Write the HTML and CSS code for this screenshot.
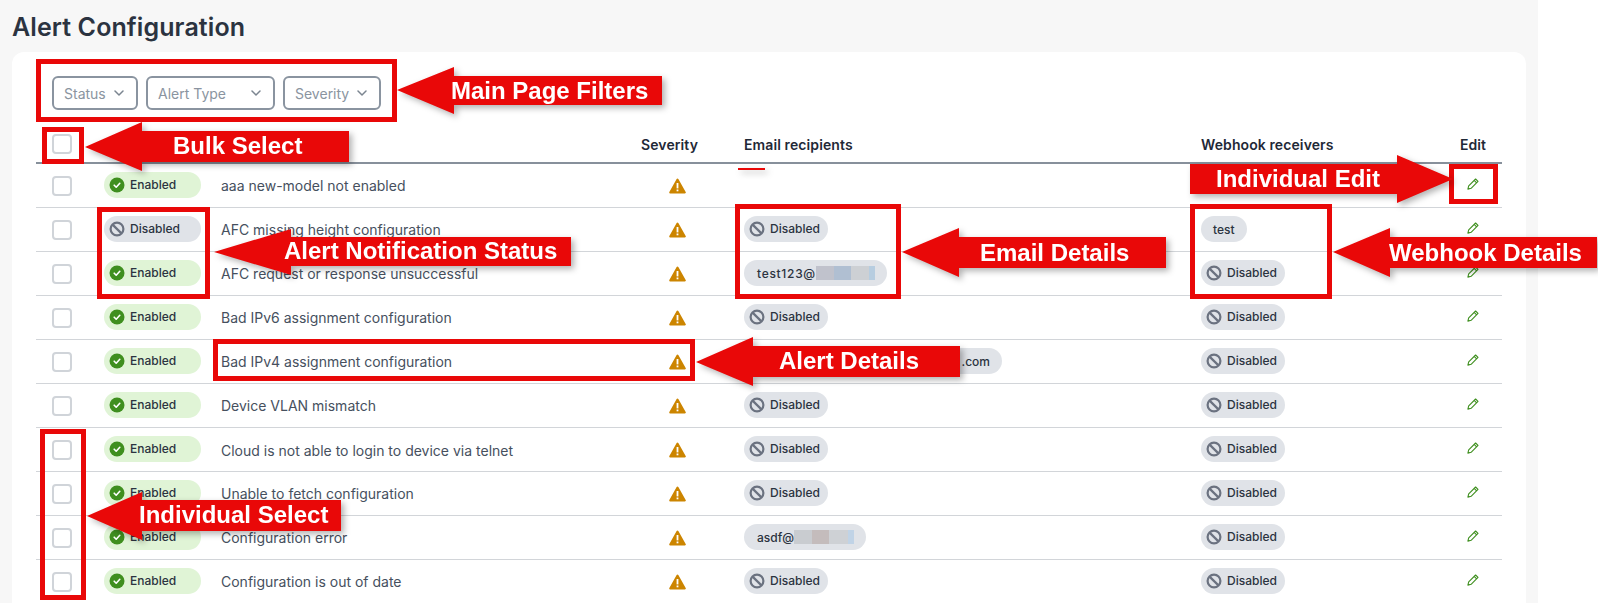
FILE: index.html
```html
<!DOCTYPE html>
<html lang="en">
<head>
<meta charset="utf-8">
<title>Alert Configuration</title>
<link rel="stylesheet" href="styles.css">
</head>
<body>
<svg class="defs" aria-hidden="true">
  <symbol id="i-check" viewBox="0 0 16 16"><circle cx="8" cy="8" r="7.5" fill="#3f8f1f"/><path d="M5.2 8.2l2 2 3.6-3.9" fill="none" stroke="#fff" stroke-width="1.6" stroke-linecap="round" stroke-linejoin="round"/></symbol>
  <symbol id="i-ban" viewBox="0 0 16 16"><circle cx="8" cy="8" r="6.4" fill="none" stroke="#6b7280" stroke-width="2.2"/><path d="M3.6 3.6l8.8 8.8" stroke="#6b7280" stroke-width="2.2"/></symbol>
  <symbol id="i-warn" viewBox="0 0 17 16"><path d="M8.5 1.5L15.8 14.4H1.2z" fill="#cc8500" stroke="#cc8500" stroke-width="2" stroke-linejoin="round"/><rect x="7.6" y="5" width="1.8" height="5.4" fill="#fff"/><rect x="7.6" y="11.5" width="1.8" height="1.8" fill="#fff"/></symbol>
  <symbol id="i-edit" viewBox="0 0 12 12"><path d="M8.6 1l2.4 2.4-6.9 6.9-3.2.8.8-3.2zM7.2 2.4l2.4 2.4" fill="none" stroke="#3f8f1f" stroke-width="1.1" stroke-linejoin="round"/></symbol>
  <symbol id="i-chev" viewBox="0 0 10 6"><path d="M1 1l4 4 4-4" fill="none" stroke="#7b8590" stroke-width="1.5" stroke-linecap="round" stroke-linejoin="round"/></symbol>
</svg>
<div class="page">
  <h1 class="title">Alert Configuration</h1>
  <main class="card">
    <div class="filters">
      <div class="select select-status"><span>Status</span><svg class="chev"><use href="#i-chev"/></svg></div>
      <div class="select select-type"><span>Alert Type</span><svg class="chev"><use href="#i-chev"/></svg></div>
      <div class="select select-severity"><span>Severity</span><svg class="chev"><use href="#i-chev"/></svg></div>
    </div>
    <div class="row head">
      <span class="check"></span><span></span><span></span>
      <span>Severity</span><span>Email recipients</span><span>Webhook receivers</span><span class="edit-head">Edit</span>
    </div>

    <div class="row">
      <span class="check"></span>
      <span class="pill pill-on pill-status"><svg class="ico"><use href="#i-check"/></svg>Enabled</span>
      <span class="desc">aaa new-model not enabled</span>
      <svg class="warn"><use href="#i-warn"/></svg>
      <span></span>
      <span></span>
      <svg class="edit"><use href="#i-edit"/></svg>
    </div>
    <div class="row">
      <span class="check"></span>
      <span class="pill pill-off pill-status"><svg class="ico"><use href="#i-ban"/></svg>Disabled</span>
      <span class="desc">AFC missing height configuration</span>
      <svg class="warn"><use href="#i-warn"/></svg>
      <span class="pill pill-off"><svg class="ico"><use href="#i-ban"/></svg>Disabled</span>
      <span class="pill pill-off pill-text pill-test">test</span>
      <svg class="edit"><use href="#i-edit"/></svg>
    </div>
    <div class="row">
      <span class="check"></span>
      <span class="pill pill-on pill-status"><svg class="ico"><use href="#i-check"/></svg>Enabled</span>
      <span class="desc">AFC request or response unsuccessful</span>
      <svg class="warn"><use href="#i-warn"/></svg>
      <span class="pill pill-off pill-text pill-spaced">test123@<i class="redact redact-a"></i></span>
      <span class="pill pill-off"><svg class="ico"><use href="#i-ban"/></svg>Disabled</span>
      <svg class="edit"><use href="#i-edit"/></svg>
    </div>
    <div class="row">
      <span class="check"></span>
      <span class="pill pill-on pill-status"><svg class="ico"><use href="#i-check"/></svg>Enabled</span>
      <span class="desc">Bad IPv6 assignment configuration</span>
      <svg class="warn"><use href="#i-warn"/></svg>
      <span class="pill pill-off"><svg class="ico"><use href="#i-ban"/></svg>Disabled</span>
      <span class="pill pill-off"><svg class="ico"><use href="#i-ban"/></svg>Disabled</span>
      <svg class="edit"><use href="#i-edit"/></svg>
    </div>
    <div class="row">
      <span class="check"></span>
      <span class="pill pill-on pill-status"><svg class="ico"><use href="#i-check"/></svg>Enabled</span>
      <span class="desc">Bad IPv4 assignment configuration</span>
      <svg class="warn"><use href="#i-warn"/></svg>
      <span class="pill pill-off pill-text pill-long">.com</span>
      <span class="pill pill-off"><svg class="ico"><use href="#i-ban"/></svg>Disabled</span>
      <svg class="edit"><use href="#i-edit"/></svg>
    </div>
    <div class="row">
      <span class="check"></span>
      <span class="pill pill-on pill-status"><svg class="ico"><use href="#i-check"/></svg>Enabled</span>
      <span class="desc">Device VLAN mismatch</span>
      <svg class="warn"><use href="#i-warn"/></svg>
      <span class="pill pill-off"><svg class="ico"><use href="#i-ban"/></svg>Disabled</span>
      <span class="pill pill-off"><svg class="ico"><use href="#i-ban"/></svg>Disabled</span>
      <svg class="edit"><use href="#i-edit"/></svg>
    </div>
    <div class="row">
      <span class="check"></span>
      <span class="pill pill-on pill-status"><svg class="ico"><use href="#i-check"/></svg>Enabled</span>
      <span class="desc desc-low">Cloud is not able to login to device via telnet</span>
      <svg class="warn"><use href="#i-warn"/></svg>
      <span class="pill pill-off"><svg class="ico"><use href="#i-ban"/></svg>Disabled</span>
      <span class="pill pill-off"><svg class="ico"><use href="#i-ban"/></svg>Disabled</span>
      <svg class="edit"><use href="#i-edit"/></svg>
    </div>
    <div class="row">
      <span class="check"></span>
      <span class="pill pill-on pill-status"><svg class="ico"><use href="#i-check"/></svg>Enabled</span>
      <span class="desc">Unable to fetch configuration</span>
      <svg class="warn"><use href="#i-warn"/></svg>
      <span class="pill pill-off"><svg class="ico"><use href="#i-ban"/></svg>Disabled</span>
      <span class="pill pill-off"><svg class="ico"><use href="#i-ban"/></svg>Disabled</span>
      <svg class="edit"><use href="#i-edit"/></svg>
    </div>
    <div class="row">
      <span class="check"></span>
      <span class="pill pill-on pill-status"><svg class="ico"><use href="#i-check"/></svg>Enabled</span>
      <span class="desc">Configuration error</span>
      <svg class="warn"><use href="#i-warn"/></svg>
      <span class="pill pill-off pill-text">asdf@<i class="redact redact-b"></i></span>
      <span class="pill pill-off"><svg class="ico"><use href="#i-ban"/></svg>Disabled</span>
      <svg class="edit"><use href="#i-edit"/></svg>
    </div>
    <div class="row">
      <span class="check"></span>
      <span class="pill pill-on pill-status"><svg class="ico"><use href="#i-check"/></svg>Enabled</span>
      <span class="desc">Configuration is out of date</span>
      <svg class="warn"><use href="#i-warn"/></svg>
      <span class="pill pill-off"><svg class="ico"><use href="#i-ban"/></svg>Disabled</span>
      <span class="pill pill-off"><svg class="ico"><use href="#i-ban"/></svg>Disabled</span>
      <svg class="edit"><use href="#i-edit"/></svg>
    </div>
  </main>

  <div class="box box-filters"></div>
  <div class="box box-bulk"></div>
  <div class="box box-status"></div>
  <div class="box box-email"></div>
  <div class="box box-webhook"></div>
  <div class="box box-edit"></div>
  <div class="box box-alert"></div>
  <div class="box box-select"></div>

  <div class="callout remnant"><div class="shape"></div></div>
  <div class="callout c-filters"><div class="shape"><span>Main Page Filters</span></div></div>
  <div class="callout c-bulk"><div class="shape"><span>Bulk Select</span></div></div>
  <div class="callout c-status"><div class="shape"><span>Alert Notification Status</span></div></div>
  <div class="callout c-email"><div class="shape"><span>Email Details</span></div></div>
  <div class="callout c-webhook"><div class="shape"><span>Webhook Details</span></div></div>
  <div class="callout c-edit"><div class="shape"><span>Individual Edit</span></div></div>
  <div class="callout c-alert"><div class="shape"><span>Alert Details</span></div></div>
  <div class="callout c-select"><div class="shape"><span>Individual Select</span></div></div>
</div>
</body>
</html>
```
FILE: styles.css
```css
* { box-sizing: border-box; }
html, body { margin: 0; height: 603px; overflow: hidden; background: #fff; }
body { font-family: Inter, "Liberation Sans", sans-serif; color: #1f2937; }
.defs { position: absolute; width: 0; height: 0; }

.page { position: relative; width: 1538px; height: 603px; padding: 0 12px; background: #f7f7f7; overflow: visible; }
.title { margin: 0; height: 52px; padding-top: 12px; font-size: 25px; line-height: 30px; font-weight: 600; letter-spacing: .1px; color: #2b3340; }
.card { width: 1514px; height: 551px; padding: 24px 24px 0; background: #fff; border-radius: 12px 12px 0 0; }

.filters { display: flex; gap: 8px; padding-left: 16px; height: 34px; }
.select { display: flex; align-items: center; justify-content: space-between; height: 34px; padding: 0 12px 0 10px; border: 2px solid #8a94a0; border-radius: 6px; font-size: 14px; color: #8a94a0; }
.select-status { width: 86px; }
.select-type { width: 129px; }
.select-severity { width: 98px; }
.chev { width: 10px; height: 6px; }

.row { display: grid; grid-template-columns: 68px 117px 420px 103px 457px 243px 58px; align-items: center; justify-items: start; height: 44px; padding-bottom: 1px; border-bottom: 1px solid #d2d5d9; }
.head { height: 54px; padding: 16px 0 0; border-bottom: 2px solid #87909b; font-size: 14px; font-weight: 600; letter-spacing: .1px; color: #1f2937; }
.head .check { margin: 0 0 0 16px; }
.edit-head { justify-self: center; }

.check { width: 20px; height: 20px; margin: 2px 0 0 16px; border: 2px solid #d0d4d9; border-radius: 4px; background: #fff; }

.pill { display: inline-flex; align-items: center; gap: 5px; height: 26px; padding: 0 8px 1px 5px; border-radius: 13px; font-size: 12px; font-weight: 500; color: #2b3340; white-space: nowrap; }
.pill-on { background: #e0f4d6; }
.pill-off { background: #e0e3e8; }
.pill-status { width: 97px; }
.pill-text { padding: 0 12px 0 13px; gap: 0; }
.pill-test { width: 46px; padding: 0 12px; }
.pill-long { width: 258px; justify-content: flex-end; }
.pill-spaced { letter-spacing: .7px; }
.ico { width: 16px; height: 16px; flex: none; }

.redact { display: block; height: 14px; }
.redact-a { width: 59px; background: linear-gradient(90deg, #c0c2cc 0 31%, #b0bfd2 31% 60%, #cdd0d4 60% 90%, #b7cde0 90%); }
.redact-b { width: 60px; background: linear-gradient(90deg, #c9ccd0 0 30%, #c4bcbc 30% 58%, #ced1d5 58% 90%, #c0d3e6 90%); }

.desc { margin-top: 1px; font-size: 14px; color: #46505e; white-space: nowrap; }
.desc-low { margin-top: 3px; }
.warn { width: 17px; height: 16px; margin: 1px 0 0 28px; }
.edit { width: 12px; height: 12px; margin-bottom: 3px; justify-self: center; }

.box { position: absolute; border: 5px solid #e90808; }
.box-filters { left: 36px; top: 59px; width: 361px; height: 63px; }
.box-bulk { left: 42px; top: 127px; width: 42px; height: 37px; }
.box-status { left: 97px; top: 207px; width: 113px; height: 92px; }
.box-email { left: 735px; top: 204px; width: 166px; height: 95px; }
.box-webhook { left: 1190px; top: 204px; width: 142px; height: 95px; }
.box-edit { left: 1449px; top: 164px; width: 49px; height: 40px; }
.box-alert { left: 213px; top: 339px; width: 482px; height: 42px; }
.box-select { left: 40px; top: 429px; width: 46px; height: 171px; }

.callout { position: absolute; filter: drop-shadow(3px 3px 3px rgba(0, 0, 0, .3)); }
.shape { display: flex; align-items: center; width: 100%; height: 100%; background: #e90808; font-family: "Liberation Sans", Arial, sans-serif; font-size: 24px; font-weight: 700; color: #fff; white-space: nowrap; }

.remnant { left: 738px; top: 168px; width: 27px; height: 2px; }

.c-filters { left: 397px; top: 67px; width: 265px; height: 47px; }
.c-filters .shape { padding-left: 54px; clip-path: polygon(0 23px, 57px 0, 57px 9px, 265px 9px, 265px 38px, 57px 38px, 57px 47px); }

.c-bulk { left: 85px; top: 122px; width: 264px; height: 49px; }
.c-bulk .shape { padding: 0 0 2px 88px; clip-path: polygon(0 25px, 57px 0, 57px 9px, 264px 9px, 264px 40px, 57px 40px, 57px 49px); }

.c-status { left: 214px; top: 229px; width: 357px; height: 46px; }
.c-status .shape { padding: 0 0 2px 70px; clip-path: polygon(0 23px, 77px 0, 77px 8px, 357px 8px, 357px 37px, 77px 37px, 77px 46px); }

.c-email { left: 902px; top: 228px; width: 264px; height: 49px; }
.c-email .shape { padding-left: 78px; clip-path: polygon(0 24px, 57px 0, 57px 9px, 264px 9px, 264px 40px, 57px 40px, 57px 49px); }

.c-webhook { left: 1333px; top: 228px; width: 264px; height: 49px; }
.c-webhook .shape { padding-left: 56px; clip-path: polygon(0 24px, 57px 0, 57px 9px, 264px 9px, 264px 40px, 57px 40px, 57px 49px); }

.c-edit { left: 1190px; top: 155px; width: 263px; height: 48px; }
.c-edit .shape { padding-left: 26px; clip-path: polygon(0 9px, 207px 9px, 207px 0, 263px 24px, 207px 48px, 207px 39px, 0 39px); }

.c-alert { left: 696px; top: 337px; width: 264px; height: 49px; }
.c-alert .shape { padding: 0 0 2px 83px; clip-path: polygon(0 25px, 57px 0, 57px 9px, 264px 9px, 264px 40px, 57px 40px, 57px 49px); }

.c-select { left: 87px; top: 492px; width: 254px; height: 48px; }
.c-select .shape { padding: 0 0 2px 52px; clip-path: polygon(0 24px, 55px 0, 55px 8px, 254px 8px, 254px 39px, 55px 39px, 55px 48px); }
```
